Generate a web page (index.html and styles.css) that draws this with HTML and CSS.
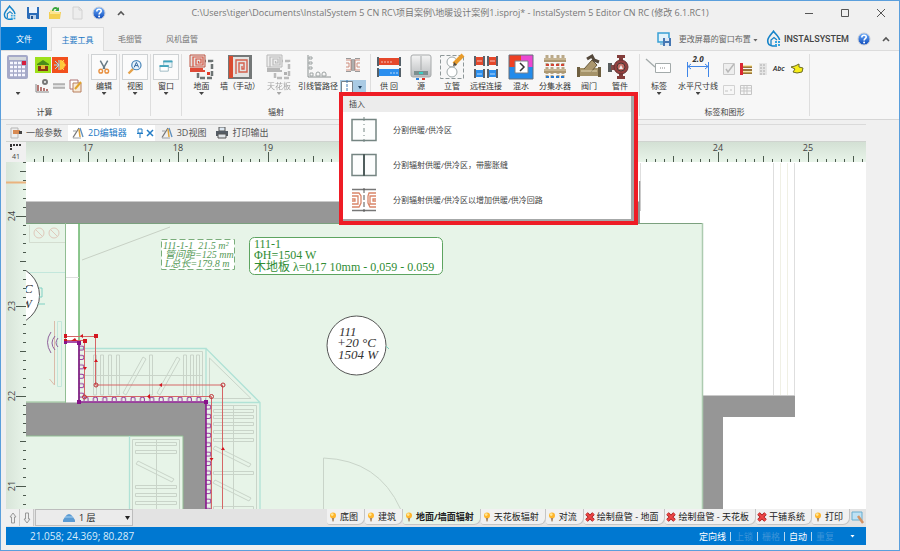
FILE: index.html
```html
<!DOCTYPE html>
<html lang="zh-CN">
<head>
<meta charset="utf-8">
<title>InstalSystem 5 Editor</title>
<link rel="stylesheet" href="styles.css">
</head>
<body>
<svg class="defs" aria-hidden="true">
  <defs>
    <linearGradient id="gBlue" x1="0" y1="0" x2="0" y2="1"><stop offset="0" stop-color="#6fb0ff"/><stop offset="1" stop-color="#0b47b8"/></linearGradient>
    <linearGradient id="gGrey" x1="0" y1="0" x2="0" y2="1"><stop offset="0" stop-color="#f4f4f4"/><stop offset="1" stop-color="#b9bcbe"/></linearGradient>
  </defs>
  <symbol id="help" viewBox="0 0 14 14"><circle cx="7" cy="7" r="6" fill="url(#gBlue)" stroke="#c5cbd6"/><path d="M4.8 5.4c0-3 4.6-2.8 4.4-.3C9.100 6.800 7.100 6.700 7.100 8.600" fill="none" stroke="#fff" stroke-width="1.600"/><circle cx="7.100" cy="10.600" r="1" fill="#fff"/></symbol>
  <symbol id="drop" viewBox="0 0 16 18"><path d="M11 16H6.500C3 15.500 1.500 12.800 1.800 10 2.200 7 6 3.500 7.500 1.200 9 3.500 13.500 7 13.500 10" fill="none" stroke="#1583c8" stroke-width="1.600"/><path d="M5 15V10l3-2.500 3 2.500" fill="none" stroke="#1583c8" stroke-width="1.300"/><path d="M9 11h2v2H9zM12 11h2v2h-2zM9 14h2v2H9zM12 14h2v2h-2z" fill="#35a4df"/></symbol>
  <symbol id="bulb" viewBox="0 0 8 10"><circle cx="4" cy="3.500" r="3" fill="#ffb52b"/><circle cx="3.200" cy="2.600" r="1.400" fill="#ffe694"/><path d="M2.800 6h2.400L4.600 9.500H3.500z" fill="#a88764"/></symbol>
  <symbol id="cross" viewBox="0 0 10 10"><path d="M1.500 1.500 8.500 8.500M8.500 1.500 1.500 8.500" stroke="#9e1212" stroke-width="3.400"/><path d="M1.500 1.500 8.500 8.500M8.500 1.500 1.500 8.500" stroke="#ee4747" stroke-width="2"/></symbol>
  <symbol id="pen" viewBox="0 0 12 12"><path d="M1 10.500 7 1" stroke="#777" stroke-width="1.300"/><path d="M1 4h3M1 11h8" stroke="#9a9fa4"/><path d="M8 1 11 10" stroke="#5b8ec0" stroke-width="1.300"/><path d="m7 2 1 8" stroke="#e0a53c" stroke-width="1.500"/></symbol>
  <symbol id="floor" viewBox="0 0 26 26"><path d="M12 7h11v17H9v-5" fill="#f5f5f5" stroke="#6d7474" stroke-width="2.500" stroke-dasharray="5 2"/><path d="M1 1h15v12H1z" fill="#e6e2e0" stroke="#bd5443"/><path d="M1 15h13M1 17h15" stroke="#df4b38" stroke-width="2"/><path d="M4 13V3h10v8H7V5h5v4H9.500V7" fill="none" stroke="#d65542" stroke-width="1.200"/><path d="M18 18h3v3h-3z" fill="#e13a28"/></symbol>
  <symbol id="zone" viewBox="0 0 26 26"><path d="M1 2.500h24v21H1z" fill="#fcfdfd" stroke="#758582" stroke-width="1.500"/></symbol>
  <symbol id="loops" viewBox="0 0 26 26"><path d="M1 2.500h24M1 23.500h24" stroke="#777" stroke-width="1.300"/><path d="M1 6h7l2 3v7l-2 4H1M1 9h6v8H1M1 12h3v2H1M25 6h-7l-1 3v7l2 4h6M25 9h-6v8h6M25 12h-3v2h3" fill="none" stroke="#d98568" stroke-width="1.300"/><path d="M13 1v24" stroke="#555" stroke-dasharray="5 2"/></symbol>
</svg>

<div class="window">
  <header class="titlebar">
    <div class="quick">
      <svg class="i16" viewBox="0 0 16 18"><use href="#drop"/></svg>
      <button aria-label="保存"><svg class="i14" viewBox="0 0 14 14"><path d="M1 1h12v12H2l-1-1z" fill="#2c6db9"/><path d="M3 1h8v6H3z" fill="#eef4fb"/><path d="M4 9h6v4H4z" fill="#b9cfe8"/><path d="M5 10h2v3H5z" fill="#23528c"/></svg></button>
      <button aria-label="打开"><svg class="i14" viewBox="0 0 14 14"><path d="M1 6h12l-1 7H1z" fill="#f3cf52"/><path d="M2 4h4l1 2h5v2H2z" fill="#fbe58f"/><path d="M4 5C4 1 8 0 10 2l1-1v4H7l1.500-1.500C7 2.500 6 3 5.500 5z" fill="#3aa63f"/></svg></button>
      <button aria-label="新建"><svg class="i14" viewBox="0 0 14 14"><path d="M3 1h6l3 3v9H3z" fill="#ededed" stroke="#d2d2d2"/><path d="M9 1v3h3" fill="none" stroke="#d2d2d2"/></svg></button>
      <button aria-label="帮助"><svg class="i14"><use href="#help"/></svg></button>
      <button aria-label="更多"><svg class="i14" viewBox="0 0 14 14"><path d="m4 9 3-3 3 3" fill="none" stroke="#555" stroke-width="1.600"/></svg></button>
    </div>
    <h1>C:\Users\tiger\Documents\InstalSystem 5 CN RC\项目案例\地暖设计案例1.isproj* - InstalSystem 5 Editor CN RC (修改 6.1.RC1)</h1>
    <div class="controls">
      <button aria-label="最小化"><svg class="i14" viewBox="0 0 14 14"><path d="M3 7.500h8" stroke="#555"/></svg></button>
      <button aria-label="最大化"><svg class="i14" viewBox="0 0 14 14"><path d="M3.500 3.500h7v7h-7z" fill="none" stroke="#555"/></svg></button>
      <button aria-label="关闭"><svg class="i14" viewBox="0 0 14 14"><path d="m3 3 8 8m0-8-8 8" stroke="#555"/></svg></button>
    </div>
  </header>

  <nav class="tabs">
    <button class="tab file">文件</button>
    <button class="tab active">主要工具</button>
    <button class="tab">毛细管</button>
    <button class="tab">风机盘管</button>
    <div class="tabs-right">
      <svg class="i14" viewBox="0 0 14 14"><path d="M1 1h11v9H1z" fill="#e2f3fb" stroke="#38a0d5" stroke-width="1.500"/><path d="M3 12h4" stroke="#38a0d5"/><path d="M6 6h8v8H6z" fill="#4677b3"/><path d="M8 6h4v3H8zM8 11h4v3H8z" fill="#dce7f4"/></svg>
      <button class="layout">更改屏幕的窗口布置 <i class="caret"></i></button>
      <svg class="brand-mark"><use href="#drop"/></svg>
      <strong class="brand">INSTALSYSTEM</strong>
      <button aria-label="帮助"><svg class="i14"><use href="#help"/></svg></button>
      <button aria-label="折叠"><svg class="i14" viewBox="0 0 14 14"><path d="m4 9 3-3 3 3" fill="none" stroke="#555" stroke-width="1.600"/></svg></button>
    </div>
  </nav>

  <section class="ribbon">
    <div class="group calc">
      <div class="tools">
        <button class="tool"><svg class="i26" viewBox="0 0 26 26"><rect x="2" y="1" width="21" height="24" rx="2" fill="#a5a9c8"/><path d="M4 3h17v3H4z" fill="#d5d9dc"/><path d="M5 9h15M5 13h15M5 17h15M5 21h15" stroke="#f7f7ff" stroke-width="2.500" stroke-dasharray="3 1"/><path d="M17 7h4v4h-4z" fill="#d51e3d"/></svg><span>&nbsp;</span><i class="caret"></i></button>
        <div class="mini calc-mini">
          <button aria-label="热负荷"><svg class="i16" viewBox="0 0 16 16"><path d="M0 0h16v16H0z" fill="#9ee01c"/><path d="m2 7 6-4 6 4v1H2z" fill="#4a8a19"/><path d="M3 9h10v5H3z" fill="#8a3516"/><path d="M6 8h4v4H6z" fill="#e8bb36"/></svg></button>
          <button aria-label="冷热"><svg class="i16" viewBox="0 0 16 16"><path d="M0 0h16v16H0z" fill="#f2501d"/><path d="M8 3a5 5 0 0 1 0 10z" fill="#ffc83a"/><path d="M7 3v10M7 8H2m1-4 4 4-4 4" stroke="#9de2f5" fill="none"/><path d="m12 3-2 2m4 3h-3m1 5-2-2" stroke="#ffdb55"/></svg></button><i></i>
          <button aria-label="图表"><svg class="i14" viewBox="0 0 14 14"><path d="M1 5v8h13" stroke="#888" fill="none"/><path d="M3 12V6m3 6V8m3 4V9m3 3v-2" stroke="#a04f49" stroke-width="1.500"/><circle cx="10" cy="3" r="2" fill="none" stroke="#777" stroke-width="2"/></svg></button>
          <button aria-label="管道"><svg class="i14" viewBox="0 0 14 14"><path d="M1 5h12v4H1z" fill="#ddd"/><path d="M1 5h12M1 9h12" stroke="#888"/></svg></button>
          <button aria-label="编辑表"><svg class="i14" viewBox="0 0 14 14"><path d="M1 1h8v9H1z" fill="#fff" stroke="#ad7272"/><path d="M4 4h8v9H4z" fill="#f8ead8" stroke="#b77e5e"/><path d="m6 10 6-7" stroke="#e0a32c" stroke-width="2"/></svg></button>
        </div>
      </div>
      <h2>计算</h2>
    </div>
    <div class="group one"><button class="tool"><svg class="i26 framed" viewBox="0 0 26 26"><path d="m9 6 5 9m3-9-5 9" stroke="#677a84" stroke-width="1.600"/><circle cx="9.500" cy="17.500" r="2" fill="none" stroke="#e8903f" stroke-width="1.500"/><circle cx="16" cy="17.500" r="2" fill="none" stroke="#e8903f" stroke-width="1.500"/></svg><span>编辑</span><i class="caret"></i></button></div>
    <div class="group one"><button class="tool"><svg class="i26 framed" viewBox="0 0 26 26"><path d="m11 15-5 5" stroke="#e5a149" stroke-width="2.500"/><circle cx="14.500" cy="11" r="5" fill="#e8f4fc" stroke="#4a86b9" stroke-width="1.300"/><path d="m12 13.500 2.500-5.500 2.500 5.500m-4-2h3" fill="none" stroke="#295f9a"/></svg><span>视图</span><i class="caret"></i></button></div>
    <div class="group one"><button class="tool"><svg class="i26 framed" viewBox="0 0 26 26"><path d="M10.500 6.500h9v7h-9z" fill="#e6f4f8" stroke="#9bb8c2"/><path d="M10 7h10" stroke="#41a4bd" stroke-width="2"/><path d="M6.500 11.500h9v6h-9z" fill="#fff" stroke="#9bb8c2"/><path d="M6 12h10" stroke="#41a4bd" stroke-width="2"/></svg><span>窗口</span><i class="caret"></i></button></div>
    <div class="group radiant">
      <div class="tools">
        <button class="tool"><svg class="i26"><use href="#floor"/></svg><span>地面</span><i class="caret"></i></button>
        <button class="tool"><svg class="i26" viewBox="0 0 26 26"><path d="M1 1h24v24H1z" fill="#747878"/><path d="M6 3h16v20H6z" fill="#e4e4e2"/><path d="M2 2h4v22H2z" fill="#d94b30"/><path d="M9 20V6h11v12h-8V9h5v6h-2v-3" fill="none" stroke="#d4614e" stroke-width="1.400"/></svg><span>墙（手动）</span></button>
        <button class="tool disabled" disabled><svg class="i26"><use href="#floor"/></svg><span>天花板</span><i class="caret"></i></button>
        <button class="tool"><svg class="i26" viewBox="0 0 26 26"><path d="M3 1v22h23" fill="none" stroke="#8a9090"/><path d="M4 3h3v2H4zM4 8h3v2H4zM4 13h3v2H4zM5 19h3v3H5zM11 20a2 2 0 0 1 4 0v2h-4zM17 20a2 2 0 0 1 4 0v2h-4z" fill="none" stroke="#9ca2a2"/></svg><span>引线管路径</span></button>
        <div class="split-col">
          <button aria-label="膨胀缝"><svg class="i16" viewBox="0 0 16 16"><path d="M1 3h5v10H1M1 6h3v4H1M15 3h-5v10h5M15 6h-3v4h3" fill="none" stroke="#cf8d7c"/><path d="M7 2v12M9 2v12" stroke="#666"/><path d="M1 1.500h5m4 0h5M1 14.500h5m4 0h5" stroke="#999"/></svg></button>
          <div class="split">
            <button aria-label="分割" aria-expanded="true"><svg viewBox="0 0 26 14"><path d="M1.500 1.500h11v11h-11z" fill="#fff" stroke="#77828b"/><path d="M7 0v14" stroke="#3e79b4" stroke-dasharray="3 1"/><path d="m18 6 2 3 2-3z" fill="#1d3f5e"/></svg></button>
            <div class="menu" role="menu">
              <h3>插入</h3>
              <button role="menuitem"><svg class="i26"><use href="#zone"/><path d="M13 0v25" stroke="#758582" stroke-dasharray="4 3 1 3"/></svg>分割供暖/供冷区</button>
              <button role="menuitem"><svg class="i26"><use href="#zone"/><path d="M13 2v22" stroke="#4f5d5c" stroke-width="2"/></svg>分割辐射供暖/供冷区，带膨胀缝</button>
              <button role="menuitem"><svg class="i26"><use href="#loops"/></svg>分割辐射供暖/供冷区以增加供暖/供冷回路</button>
            </div>
          </div>
        </div>
      </div>
      <h2>辐射</h2>
    </div>
    <div class="group pipes">
      <div class="tools">
        <button class="tool"><svg class="i26" viewBox="0 0 26 26"><path d="M2 4h22v7H2z" fill="#e5472a"/><path d="M2 15h22v7H2z" fill="#2b8fef"/><path d="M1 3h2v9H1zM23 3h2v9h-2zM1 14h2v9H1zM23 14h2v9h-2z" fill="#55616a"/><path d="M5 8h11m-2 11h8" stroke="#ffffffaa" stroke-dasharray="2 1"/></svg><span>供 回</span></button>
        <button class="tool"><svg class="i26" viewBox="0 0 26 26"><rect x="3" y="1" width="20" height="22" rx="2" fill="url(#gGrey)" stroke="#a6a9aa"/><path d="M13 2v14" stroke="#a6a9aa"/><path d="M6 17h14v4H6z" fill="#7c8f90"/><path d="M11 18h4v2h-4z" fill="#39d0c4"/><path d="M8 25h3" stroke="#2a81e0" stroke-width="2"/><path d="M14 25h3" stroke="#df3428" stroke-width="2"/></svg><span>源</span></button>
        <button class="tool"><svg class="i26" viewBox="0 0 26 26"><path d="M1.500 1.500h23v23h-23z" fill="none" stroke="#8e9798" stroke-dasharray="4 2"/><circle cx="13" cy="8" r="5" fill="#fff" stroke="#9ea7a8"/><circle cx="13" cy="18" r="5" fill="#fff" stroke="#9ea7a8"/><path d="m15 10 9-9" stroke="#e89b2b" stroke-width="4"/><path d="m14 12 1-4 3 3z" fill="#534a3e"/></svg><span>立管</span></button>
        <button class="tool"><svg class="i26" viewBox="0 0 26 26"><path d="M2 3h9v8H2zM15 3h9v8h-9z" fill="#e5472a"/><path d="M2 16h9v7H2zM15 16h9v7h-9z" fill="#2b8fef"/><path d="M1 2h2v10H1zM10 2h2v10h-2zM14 2h2v10h-2zM23 2h2v10h-2zM1 15h2v9H1zM10 15h2v9h-2zM14 15h2v9h-2zM23 15h2v9h-2z" fill="#5b626b"/><path d="M4 7h5m8 0h5M4 20h5m8 0h5" stroke="#ffffffaa"/></svg><span>远程连接</span></button>
        <button class="tool"><svg class="i26" viewBox="0 0 26 26"><path d="M1 1h13v13H1z" fill="#ed4024"/><path d="M13 1h12v13H13z" fill="#ec47d1"/><path d="M1 13h24v12H1z" fill="#238bea"/><path d="M1 1h24v24H1z" fill="none" stroke="#65717d"/><path d="M7 7h13v12H7z" fill="#fff" stroke="#79808a"/><path d="m12 9 4 4-4 4" fill="none" stroke="#333" stroke-width="1.500"/></svg><span>混水</span></button>
        <button class="tool"><svg class="i26" viewBox="0 0 26 26"><path d="M5 1v23m5-23v23m6-23v23m5-23v23" stroke="#b9a888" stroke-width="3" stroke-dasharray="3 1"/><path d="M2 6h22M2 17h22" stroke="#ac9872" stroke-width="4"/><path d="M2 5h22M2 16h22" stroke="#dfd0b1"/><path d="M4 11h19" stroke="#d14434" stroke-width="2" stroke-dasharray="3 2"/><path d="M4 23h19" stroke="#2a79cc" stroke-width="2" stroke-dasharray="3 2"/></svg><span>分集水器</span></button>
        <button class="tool"><svg class="i26" viewBox="0 0 26 26"><path d="M1 14h24v8H1z" fill="#a59369"/><path d="M1 13h3v10H1zM22 13h3v10h-3z" fill="#6e5f40"/><path d="m8 15 8-9 5 5-6 7" fill="#aa966d" stroke="#66583a"/><path d="m11 5 5-3 2 4 5 2" stroke="#54483b" stroke-width="3" fill="none"/><path d="M5 17h16" stroke="#e2d6b3"/></svg><span>阀门</span></button>
        <button class="tool"><svg class="i26" viewBox="0 0 26 26"><path d="M10 1h8v3h-2v18h2v3h-8v-3h2V4h-2z" fill="#833d3b"/><path d="M1 9h4v9H1z" fill="#575d5e"/><path d="M4 11h6v5H4z" fill="#814745"/><circle cx="14" cy="13" r="7" fill="#943f3e" stroke="#633"/><circle cx="14" cy="13" r="4" fill="#c36e65" stroke="#463737"/><path d="m12 15 2-4 2 4z" fill="#eee"/></svg><span>管件</span></button>
      </div>
    </div>
    <div class="group shapes">
      <div class="tools">
        <button class="tool"><svg class="i26" viewBox="0 0 26 26"><path d="m0 5 9 8" stroke="#a3aaaa" stroke-width="1.300"/><path d="M9.500 9.500h15v9h-15z" fill="#fff" stroke="#a3aaaa"/><path d="M14 14h6" stroke="#888" stroke-dasharray="1 1"/></svg><span>标签</span><i class="caret"></i></button>
        <button class="tool"><svg class="i26" viewBox="0 0 26 26"><text class="dim" x="13" y="8" text-anchor="middle">2.0</text><path d="M2.500 8v15m21-15v15M3 12.500h20M6 10l-3 2.500L6 15M20 10l3 2.500L20 15" fill="none" stroke="#3f86e8"/></svg><span>水平尺寸线</span><i class="caret"></i></button>
        <div class="mini shape-mini">
          <button aria-label="图形"><svg class="i14" viewBox="0 0 14 14"><path d="M1.500 1.500h11v11h-11z" fill="#eee" stroke="#c9c9c9"/><path d="m4 7 2 3 6-8" fill="none" stroke="#b8b8b8" stroke-width="1.500"/></svg></button>
          <button aria-label="图例"><svg class="i14" viewBox="0 0 14 14"><path d="M1 1h3v12H1z" fill="#da2733"/><path d="M4 5h9M4 8h9M4 11h9" stroke="#98743b" stroke-width="2"/><path d="M4 4h9M4 10h9" stroke="#f2d46b"/></svg></button>
          <button aria-label="列表"><svg class="i14" viewBox="0 0 14 14"><path d="M3 1h8v12H3z" fill="#e5e5e5"/><path d="M4 3h6M4 6h6M4 9h6M4 12h6" stroke="#aaa" stroke-dasharray="2 1"/></svg></button>
          <button class="abc">Abc</button>
          <button aria-label="多边形"><svg class="i14" viewBox="0 0 14 14"><path d="m1 5 4-1 4-2v3l4 1-1 4-5 1-4-1 2-3z" fill="#f7ee19" stroke="#6b6b24"/></svg></button>
          <button aria-label="图片"><svg class="i14" viewBox="0 0 14 14"><path d="M1.500 2.500h11v9h-11z" fill="#f7f7f7" stroke="#d2d2d2"/><path d="M3 8h3m2-1h2" stroke="#c3c3c3"/></svg></button>
          <button aria-label="表格"><svg class="i14" viewBox="0 0 14 14"><path d="M1.500 2.500h11v9h-11zM2 5h10M2 8h10M5 3v9M8 3v9" fill="none" stroke="#c5c5c5"/></svg></button>
        </div>
      </div>
      <h2>标签和图形</h2>
    </div>
  </section>

  <main class="workspace">
    <nav class="doctabs">
      <button><svg class="i12" viewBox="0 0 12 12"><path d="M1 1h7v10H1z" fill="#eee" stroke="#b5b5b5"/><path d="M3 3h7v4H3z" fill="#d88a52"/><path d="M9 4h3v3H9z" fill="#444"/></svg>一般参数</button>
      <button class="current"><svg class="i12"><use href="#pen"/></svg>2D编辑器<svg class="pin" viewBox="0 0 20 10"><path d="M4 1h4v4H4zM3 5.500h6M6 6v4" fill="none" stroke="#237cc5"/><path d="m13 2 6 6m0-6-6 6" stroke="#237cc5" stroke-width="1.500"/></svg></button>
      <button><svg class="i12"><use href="#pen"/></svg>3D视图</button>
      <button class="print"><svg class="i12" viewBox="0 0 12 12"><path d="M3 0h6v4H3z" fill="#dfe9f2" stroke="#555"/><path d="M0 4h12v5H0z" fill="#555c65"/><path d="M2 7h8v4H2z" fill="#e0e4e8" stroke="#555"/></svg>打印输出</button>
    </nav>
    <div class="editor">
      <div class="corner"><svg viewBox="0 0 14 8"><path d="M1 2h12M2 2v6" fill="none" stroke="#333" stroke-width="2" stroke-dasharray="2 1"/></svg>41</div>
      <svg class="hruler">
        <defs><pattern id="ht" x="57" width="90" height="20" patternUnits="userSpaceOnUse"><path d="M5.500 10v10M50.500 14v6M14.500 17v3M23.500 17v3M32.500 17v3M41.500 17v3M59.500 17v3M68.500 17v3M77.500 17v3M86.500 17v3" stroke="#4c5a4e"/></pattern></defs>
        <rect width="100%" height="20" fill="url(#ht)"/>
        <text x="62" y="9">17</text><text x="152" y="9">18</text><text x="242" y="9">19</text><text x="692" y="9">24</text><text x="782" y="9">25</text>
      </svg>
      <svg class="vruler">
        <defs><pattern id="vt" y="49" width="20" height="90" patternUnits="userSpaceOnUse"><path d="M10 5.500h10M14 50.500h6M17 14.500h3M17 23.500h3M17 32.500h3M17 41.500h3M17 59.500h3M17 68.500h3M17 77.500h3M17 86.500h3" stroke="#4c5a4e"/></pattern></defs>
        <rect width="20" height="100%" fill="url(#vt)"/><path d="M0 20.500h20" stroke="#eab37e" stroke-width="2"/>
        <text transform="translate(9 54) rotate(-90)">24</text><text transform="translate(9 144) rotate(-90)">23</text><text transform="translate(9 234) rotate(-90)">22</text><text transform="translate(9 324) rotate(-90)">21</text>
      </svg>
      <svg class="plan">
        <defs>
          <pattern id="clipX" x="82" y="395" width="9.400" height="8" patternUnits="userSpaceOnUse"><path d="M2 6V4a2 2 0 0 1 4 0v2" fill="none" stroke="#93359a"/></pattern>
          <pattern id="clipY" x="206" y="402" width="8" height="9.400" patternUnits="userSpaceOnUse"><path d="M0 3h3a2 2 0 0 1 0 4H0" fill="none" stroke="#93359a"/></pattern>
        </defs>
        <g transform="translate(-26 -162)">
          <path d="M79 223h623v286H79zM26 223h40v180H26zM26 436h158v73H26z" fill="#e7f4e8"/>
          <path d="M26 201.500h614V223H26zM639 181h1.500v30H639zM26 402.500h180V509h-23v-73H26zM702 395.500h93V417h-72v92h-21z" fill="#969696"/>
          <path d="M26 223.500h676" stroke="#7ba07e"/><path d="M702.500 223v286" stroke="#adcbb0" stroke-width="1.500"/><path d="M79 223v180" stroke="#68b46b" stroke-width="1.500"/><path d="M65.500 223v180M26 402h40M26 436h157v73" fill="none" stroke="#91bd93"/>
          <path d="M66 277.500h13M640.500 163v18M773.500 163v232M794.500 163v232" stroke="#dedede"/><path d="M780.500 163v232M787.500 163v232" stroke="#f0f0e5"/>
          <path d="m82 260 88-33" stroke="#c7d0c4"/>
          <g fill="none" stroke="#dfc9bb"><path d="M29.500 225v17.500H65" stroke="#d4ddd0"/><circle cx="39" cy="233" r="5"/><circle cx="54" cy="233" r="5"/><path d="m35.500 229.500 7 7m8-7 7 7"/><path d="M54.500 321v64l-5-6" stroke="#dabbaa"/></g>
          <path d="M26 272.500h39M57.500 321.500h4v65h-4z" fill="none" stroke="#c3e7dc"/>
          <circle cx="10" cy="295.500" r="29.500" fill="#fff" stroke="#555"/>
          <g class="room"><text x="24" y="293">C</text><text x="21" y="308">W</text></g>
          <path d="M39 288h3v9h-3M38 304h7" fill="none" stroke="#7fd0c3"/>
          <path d="M51 332q-7 10 0 21M55 336q-6 7 0 14M58 338q-4 5 0 9" fill="none" stroke="#8f629c"/>
          <g fill="none" stroke="#b0e2d6"><path d="M79 348.500h127v54M206 348.500l54 54V509M206 402.500h54M129.500 436v73" stroke-width="1.300"/></g>
          <g fill="none" stroke="#c9d4c9">
            <path d="M84.500 351.500h118v45h-118zM84 375.500h118M93.500 355h3v40h-3zM100.500 355h3v40h-3zM108.500 355h3v40h-3zM116.500 355h3v40h-3zM149.500 355h3v40h-3zM183.500 355h3v40h-3zM190.500 355h3v40h-3zM196.500 355h3v40h-3zM143 357l3 2-20 36-3-2zM177 357l3 2-20 36-3-2zM209.500 358v40.500H251z"/>
            <path d="M210.500 509V405.500h46V509M233.500 405v104M213.500 409.500h40v3h-40zM213.500 415.500h40v3h-40zM213.500 422.500h40v3h-40zM213.500 430.500h40v3h-40zM213.500 438.500h40v3h-40zM213.500 471.500h40v3h-40zM213.500 506.500h40v3h-40zM215 446l36 18-2 3-36-18zM215 480l36 18-2 3-36-18z"/>
            <path d="M132.500 509v-69.500h47V509M156.500 440v69M135.500 442.500h41v3h-41zM135.500 450.500h41v3h-41zM135.500 485.500h41v3h-41zM135.500 493.500h41v3h-41zM135.500 501.500h41v3h-41zM138 461l36 18-2 3-36-18z"/>
            <path d="M323.500 509v-51q55 2 77 51"/>
          </g>
          <path d="M82 395h124v8H82z" fill="url(#clipX)"/><path d="M206 402h8v107h-8z" fill="url(#clipY)"/><g transform="translate(-127 -59)"><path d="M206 402h8v55h-8z" fill="url(#clipY)"/></g>
          <path d="M65 342h14v60h127v107" fill="none" stroke="#8a168e" stroke-width="1.600"/>
          <path d="M65 336.500h30.500v48.500H222.500v124" fill="none" stroke="#d56666"/><path d="M65 340.500h19.500v56h127V509" fill="none" stroke="#d56666"/>
          <path d="M64 334h3v4h-3zM94 334h4v4h-4zM64 339h3v3h-3zM83 339h4v4h-4zM83 334v4l-3-2zM162 383v4l-3-2zM150 394v5l-3-2.500zM94 362l4 0-2-3zM83 367h4l-2 3zM221 450h4l-2-3zM209.500 458h4l-2 3zM71 341l4-3 2 3z" fill="#d31620"/>
          <g fill="none" stroke="#bd3438"><circle cx="96" cy="385" r="2"/><circle cx="223" cy="385" r="2"/><circle cx="84.500" cy="397" r="2"/><circle cx="211.500" cy="396.500" r="2"/></g>
          <path d="M64 341h3v3h-3zM77 341h4v4h-4zM77 400h4v4h-4zM204 400h4v4h-4z" fill="#88138a"/>
          <rect x="161.500" y="239.500" width="73" height="30" fill="#fff" stroke="#7aae7b" stroke-dasharray="6 3"/>
          <g class="pipe-note"><text x="163" y="249">111-1-1&#160; 21.5 m²</text><text x="165" y="258">管间距=125 mm</text><text x="165" y="267">L总长=179.8 m</text></g>
          <rect x="249.500" y="237.500" width="193" height="37" rx="5" fill="#fff" stroke="#5da460"/>
          <g class="zone-note"><text x="254" y="248">111-1</text><text x="254" y="259">ΦH=1504 W</text><text x="254" y="271">木地板 λ=0,17 10mm - 0,059 - 0.059</text></g>
          <circle cx="356.500" cy="345.500" r="29.500" fill="#fff" stroke="#555"/><path d="m386 346 3 3" stroke="#79d0be"/>
          <g class="room"><text x="339" y="336">111</text><text x="337" y="347">+20 °C</text><text x="338" y="359">1504 W</text></g>
        </g>
      </svg>
    </div>
    <div class="sheetbar">
      <button class="arrow" aria-label="上一层"><svg viewBox="0 0 10 12"><path d="m5 1 3 4H6.500v6h-3V5H2z" fill="#eee" stroke="#999"/></svg></button>
      <button class="arrow" aria-label="下一层"><svg viewBox="0 0 10 12"><path d="m5 11 3-4H6.500V1h-3v6H2z" fill="#eee" stroke="#999"/></svg></button>
      <div class="storey"><svg viewBox="0 0 12 10"><path d="M2 4q4-6 8 0l2 3v2H0V7z" fill="#5b9bd3"/><path d="M2 4h8" stroke="#a9d3f3"/></svg><select aria-label="楼层"><option>1 层</option></select><i class="caret"></i></div>
      <nav class="sheets">
        <button><svg class="bulb"><use href="#bulb"/></svg>底图</button>
        <button><svg class="bulb"><use href="#bulb"/></svg>建筑</button>
        <button class="current"><svg class="bulb"><use href="#bulb"/></svg>地面/墙面辐射</button>
        <button><svg class="bulb"><use href="#bulb"/></svg>天花板辐射</button>
        <button><svg class="bulb"><use href="#bulb"/></svg>对流</button>
        <button class="off"><svg class="cross"><use href="#cross"/></svg>绘制盘管 - 地面</button>
        <button class="off"><svg class="cross"><use href="#cross"/></svg>绘制盘管 - 天花板</button>
        <button class="off"><svg class="cross"><use href="#cross"/></svg>干铺系统</button>
        <button><svg class="bulb"><use href="#bulb"/></svg>打印</button>
        <button class="view" aria-label="视图"><svg class="i14" viewBox="0 0 14 14"><path d="M1 2h10v8H1z" fill="#bee2f5" stroke="#69adcf"/><path d="m7 6 5 7" stroke="#d39364" stroke-width="2.500"/></svg></button>
      </nav>
    </div>
    <footer class="status">
      <output>21.058; 24.369; 80.287</output>
      <div class="modes"><button>定向线</button><button class="off">上锁</button><button class="off">栅格</button><button>自动</button><button class="off">重复</button></div>
      <i class="caret"></i>
    </footer>
  </main>
</div>
</body>
</html>
```
FILE: styles.css
```css
* { box-sizing: border-box; }
body {
  margin: 0;
  font-family: "Open Sans", "Noto Sans CJK SC", sans-serif;
  font-size: 8px;
  line-height: 10px;
  color: #444;
}
h1, h2, h3 { margin: 0; font-weight: 400; }
button {
  margin: 0; padding: 0; border: 0; background: none;
  font: inherit; color: inherit; white-space: nowrap;
}
svg { display: block; flex: none; }
.defs { position: absolute; width: 0; height: 0; }
.i12 { width: 12px; height: 12px; }
.i14 { width: 14px; height: 14px; }
.i16 { width: 16px; height: 16px; }
.i26 { width: 26px; height: 26px; overflow: visible; }
.caret {
  display: inline-block; width: 5px; height: 3px;
  background: currentColor; clip-path: polygon(0 0, 100% 0, 50% 100%);
}

.window {
  display: flex; flex-direction: column;
  min-height: 100vh;
  border: 1px solid #5b9fdc;
  background: #f0f0f0;
}
.titlebar { display: flex; align-items: center; height: 24px; flex: none; }
.quick { display: flex; align-items: center; gap: 8px; padding-left: 1px; }
.titlebar h1 { flex: 1; text-align: center; font-size: 9px; line-height: 14px; color: #777; white-space: nowrap; padding-right: 30px; }
.controls { display: flex; gap: 22px; padding-right: 11px; }

.tabs { display: flex; height: 26px; flex: none; padding-top: 2px; border-bottom: 1px solid #dcdcdc; }
.tab { padding: 0 12px; font-size: 8px; color: #777; }
.tab.file { width: 46px; background: #0078d1; color: #fff; margin-right: 4px; }
.tab.active { width: 53px; padding: 0; background: #f7f7f7; border: 1px solid #dcdcdc; border-bottom: 0; color: #1978c4; margin-bottom: -1px; margin-right: 2px; }
.tabs-right { margin-left: auto; display: flex; align-items: center; gap: 8px; padding-right: 6px; }
.layout { color: #666; }
.brand-mark { width: 16px; height: 18px; }
.brand { font-family: Roboto, sans-serif; font-size: 9px; font-weight: 500; color: #444; margin-left: -6px; }

.ribbon { display: flex; height: 69px; flex: none; padding-top: 3px; background: #f7f7f7; border-bottom: 1px solid #d6d6d6; }
.group { display: flex; flex-direction: column; justify-content: space-between; border-right: 1px solid #dedede; margin-bottom: 3px; }
.group h2 { text-align: center; font-size: 8px; line-height: 8px; }
.tools { display: grid; }
.tool { display: flex; flex-direction: column; align-items: center; gap: 1px; min-width: 0; }
.tool span { color: #333; }
.disabled { filter: grayscale(1) opacity(.45); }
.framed { border: 1px solid #cfd2d4; background: #fbfbfb; }
.calc { width: 88px; }
.calc .tools { grid-template-columns: 34px 53px; }
.one { width: 31px; }
.one .tool { width: 30px; }
.radiant { width: 189px; }
.radiant .tools { grid-template-columns: 39px 38px 40px 38px 32px; }
.pipes { width: 269px; }
.pipes .tools { grid-template-columns: 36px 28px 34px 34px 36px 32px 36px 26px; }
.shapes { width: 170px; }
.shapes .tools { grid-template-columns: 38px 40px 90px; }
.mini { display: grid; align-content: start; align-items: center; }
.calc-mini { grid-template-columns: repeat(3, 17px); row-gap: 6px; padding-top: 3px; }
.shape-mini { grid-template-columns: repeat(5, 17px); row-gap: 7px; padding: 8px 0 0 4px; }
.abc { font-family: "Open Sans", sans-serif; font-size: 7px; font-style: italic; font-weight: 600; color: #222; text-align: left; }
.dim { font: italic bold 8px "Open Sans", sans-serif; fill: #333; }
.split-col { display: flex; flex-direction: column; align-items: center; gap: 7px; padding-top: 3px; }
.split { position: relative; width: 26px; height: 14px; background: #a9cbe4; }
.split > button, .split > button svg { width: 26px; height: 14px; display: block; }
.menu {
  position: absolute; z-index: 2; left: -1px; top: 12px;
  width: 299px; height: 133px;
  border: 4px solid #ee1c25; background: #fff;
  box-shadow: inset -3px -2px 0 #a6a8a8;
}
.menu h3 { height: 16px; margin-right: 3px; padding: 3px 6px; background: #ececec; font-size: 8px; line-height: 10px; }
.menu button { display: flex; align-items: center; gap: 16px; height: 35px; padding-left: 8px; }

.workspace { display: flex; flex-direction: column; flex: 1; margin: 4px 33px 5px 5px; border-top: 1px solid #dadada; }
.doctabs { display: flex; height: 16px; flex: none; font-size: 9px; color: #555; padding-left: 4px; }
.doctabs button { display: flex; align-items: center; gap: 4px; padding-right: 6px; }
.doctabs .current { background: #fff; color: #1978c4; padding-left: 4px; padding-right: 0; margin-right: 6px; }
.doctabs .print { padding-left: 4px; }
.pin { width: 22px; height: 10px; margin-left: 2px; }
.editor { display: grid; grid-template: 20px minmax(0, 1fr) / 20px minmax(0, 1fr); flex: 1; border-top: 1px solid #cfd3cf; }
.corner { display: flex; flex-direction: column; align-items: center; font-size: 7px; line-height: 9px; background: #f0f0f0; }
.corner svg { width: 14px; height: 10px; }
.hruler { width: 100%; height: 20px; background: linear-gradient(#d3e0d4, #e8f4e9); }
.vruler { width: 20px; height: 100%; background: linear-gradient(90deg, #d8e5d9, #e8f4e9); }
.hruler text, .vruler text { font-size: 9px; fill: #444; text-anchor: middle; }
.plan { width: 100%; height: 100%; background: #fff; }
.plan text { font-family: "Liberation Serif", "Noto Sans CJK SC", serif; }
.pipe-note { font-size: 10px; font-style: italic; fill: #559a57; }
.zone-note { font-size: 12px; fill: #2f8d34; }
.room { font-size: 13px; font-style: italic; fill: #333; }

.sheetbar { display: flex; height: 18px; flex: none; background: #e3e3e3; font-size: 9px; color: #222; }
.arrow { width: 14px; height: 17px; padding: 2px; border-right: 1px solid #c8c8c8; background: #f0f0f0; }
.arrow svg { width: 10px; height: 12px; }
.storey { position: relative; width: 98px; height: 17px; margin-left: 1px; border: 1px solid #bdbdbd; background: #ebebeb; }
.storey svg { position: absolute; left: 27px; top: 3px; width: 12px; height: 10px; }
.storey .caret { position: absolute; right: 2px; top: 6px; width: 5px; height: 4px; }
.storey select { appearance: none; width: 100%; height: 15px; padding: 0 0 0 43px; border: 0; background: none; font: inherit; font-size: 9px; color: inherit; }
.sheets { display: flex; margin-left: auto; }
.sheets button { display: flex; align-items: center; gap: 3px; height: 16px; padding: 0 6px 0 2px; background: #f1f1f1; border-right: 1px solid #c5c5c5; border-bottom: 1px solid #c5c5c5; border-radius: 0 0 7px 3px; }
.sheets .current { background: #e7f4e8; font-weight: 700; }
.sheets .off { gap: 2px; padding-left: 1px; }
.sheets .view { padding: 0 1px; border: 0; background: none; }
.bulb { width: 8px; height: 10px; }
.cross { width: 10px; height: 10px; }
.status { display: flex; align-items: center; height: 18px; flex: none; background: #0078d1; color: #fff; padding: 0 11px 0 24px; font-size: 9px; }
.status output { font-size: 10px; color: #d9ecfa; }
.modes { display: flex; margin-left: auto; }
.modes button { padding: 0 4px; border-right: 1px solid #b5d7ef; line-height: 9px; }
.modes button:last-child { border: 0; }
.modes .off { color: #3d94d8; }
.status > .caret { margin-left: 12px; }
```
